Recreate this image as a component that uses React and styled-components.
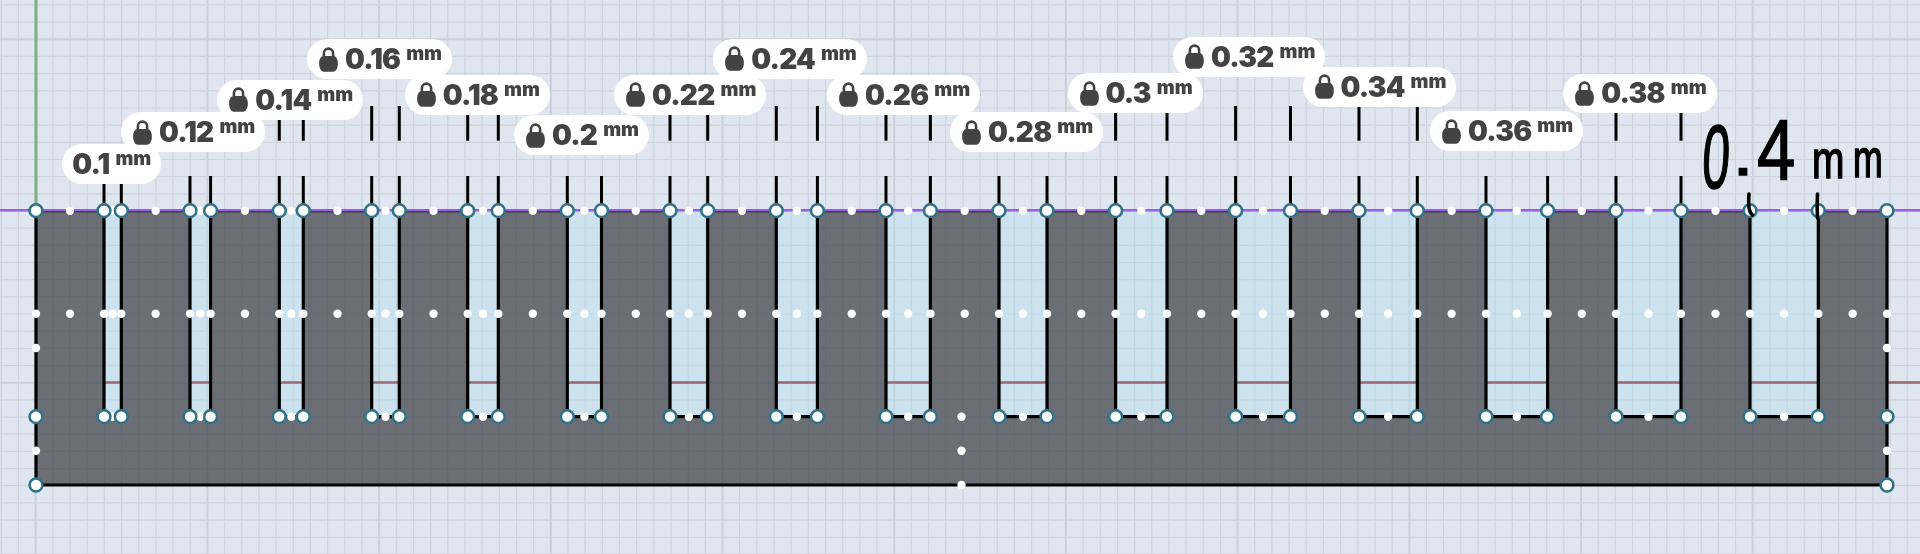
import React from "react";
import styled, { createGlobalStyle } from "styled-components";

const GlobalStyle = createGlobalStyle`
  html, body, #root {
    margin: 0;
    padding: 0;
    height: 100%;
  }
  body {
    background: #e0e6ef;
    font-family: "Inter", "Liberation Sans", sans-serif;
    overflow: hidden;
  }
`;

const Canvas = styled.div`
  position: relative;
  width: 1920px;
  height: 554px;
  overflow: hidden;
  background: #e0e6ef;
  filter: blur(0.35px);
`;

const Sketch = styled.svg`
  display: block;
`;

const DimensionPill = styled.div`
  position: absolute;
  left: ${(p) => p.$left}px;
  top: ${(p) => p.$top}px;
  height: 39.5px;
  box-sizing: border-box;
  padding: 0 10px 0 ${(p) => (p.$locked ? 12 : 10)}px;
  display: flex;
  align-items: center;
  background: #fff;
  border-radius: 20px;
  color: #434343;
  white-space: nowrap;
`;

const Value = styled.span`
  font-size: 28px;
  font-weight: 900;
  letter-spacing: -0.8px;
  line-height: 1;
  margin-left: ${(p) => (p.$locked ? 7 : 0)}px;
`;

const Unit = styled.span`
  font-size: 19px;
  font-weight: 900;
  line-height: 1;
  margin-left: 6px;
  margin-top: -11px;
`;

const Note = styled.div`
  position: absolute;
  left: 1700px;
  top: 112px;
  display: flex;
  align-items: baseline;
  color: #000;
  font-family: "Liberation Sans", sans-serif;
  line-height: 1;
  -webkit-text-stroke: 1.6px #000;
`;

const NoteGlyph = styled.span`
  display: block;
  width: ${(p) => p.$width}px;
  font-size: ${(p) => p.$size}px;
  transform-origin: left bottom;
  transform: translateY(${(p) => p.$lift || 0}px) scaleX(${(p) => p.$sx}) skewX(${(p) => p.$skew || 0}deg);
`;

const ORIGIN_X = 35.7;
const ORIGIN_Y = 39.3;
const STEP = 17.17;

const LEFT = 36;
const RIGHT = 1887;
const TOP = 210.7;
const MID = 313.7;
const AXIS = 382.5;
const SLOT_BOTTOM = 416.7;
const BOTTOM = 485;

const slots = [
  [104, 121.3],
  [190, 210.6],
  [279.3, 303.3],
  [371.7, 399.3],
  [467.7, 498.3],
  [567.3, 601.5],
  [670, 707.7],
  [776.3, 817.4],
  [886, 930.4],
  [999, 1047],
  [1115.6, 1167],
  [1235.6, 1290.5],
  [1359, 1417.3],
  [1486, 1547.6],
  [1616, 1681],
  [1750, 1818.3],
];

// y where the upper part of the extension line starts, null when there is none
const upperTops = [null, null, 120, 106, 115, null, 115, 106, 115, null, 112.7, 106, 106, null, 113];

const labels = [
  { text: "0.1", left: 62.3, top: 144, locked: false },
  { text: "0.12", left: 121, top: 112.3, locked: true },
  { text: "0.14", left: 217.3, top: 80, locked: true },
  { text: "0.16", left: 307, top: 39.3, locked: true },
  { text: "0.18", left: 404.7, top: 75, locked: true },
  { text: "0.2", left: 514, top: 115.3, locked: true },
  { text: "0.22", left: 614, top: 75, locked: true },
  { text: "0.24", left: 713.3, top: 39, locked: true },
  { text: "0.26", left: 827, top: 75, locked: true },
  { text: "0.28", left: 950, top: 112.3, locked: true },
  { text: "0.3", left: 1067.5, top: 73.3, locked: true },
  { text: "0.32", left: 1173, top: 37, locked: true },
  { text: "0.34", left: 1302.5, top: 67, locked: true },
  { text: "0.36", left: 1430, top: 111.3, locked: true },
  { text: "0.38", left: 1563.3, top: 73.5, locked: true },
];

const LockIcon = () => (
  <svg width="19" height="25" viewBox="0 0 18 24">
    <path d="M4.6 11V6a4.400 4.400 0 0 1 8.800 0V11" fill="none" stroke="#434343" strokeWidth="2.500" />
    <path
      d="M4.400 8.600h9.200c2.700 0 4.400 3 4.400 7.400 0 5-2.400 7.800-5 7.800H5c-2.600 0-5-2.800-5-7.800 0-4.400 1.700-7.400 4.400-7.400z"
      fill="#434343"
    />
  </svg>
);

const Grid = () => {
  const xs = [];
  for (let i = -2; i < 112; i++) xs.push(ORIGIN_X + i * STEP);
  const ys = [];
  for (let i = -2; i < 31; i++) ys.push(ORIGIN_Y + i * STEP);
  return (
    <g>
      {xs.map((x, i) => {
        const major = (i - 2) % 10 === 0;
        return (
          <line key={x} x1={x} x2={x} y1="0" y2="554" stroke={major ? "#cacfda" : "#ced3dd"} strokeWidth={major ? 2 : 1.2} />
        );
      })}
      {ys.map((y, i) => {
        const major = (i - 2) % 10 === 0;
        return (
          <line key={y} x1="0" x2="1920" y1={y} y2={y} stroke={major ? "#cacfda" : "#ced3dd"} strokeWidth={major ? 2 : 1.2} />
        );
      })}
    </g>
  );
};

const profile = () => {
  let d = `M${LEFT} ${TOP}`;
  slots.forEach(([a, b]) => {
    d += ` L${a} ${TOP} L${a} ${SLOT_BOTTOM} L${b} ${SLOT_BOTTOM} L${b} ${TOP}`;
  });
  d += ` L${RIGHT} ${TOP} L${RIGHT} ${BOTTOM} L${LEFT} ${BOTTOM} Z`;
  return d;
};

const App = () => {
  const edges = [LEFT, ...slots.flat(), RIGHT];
  const topDots = [];
  for (let i = 0; i < edges.length - 1; i++) topDots.push((edges[i] + edges[i + 1]) / 2);
  const slotMids = slots.map(([a, b]) => (a + b) / 2);

  const nodes = [
    [LEFT, TOP],
    [RIGHT, TOP],
    [LEFT, SLOT_BOTTOM],
    [RIGHT, SLOT_BOTTOM],
    [LEFT, BOTTOM],
    [RIGHT, BOTTOM],
  ];
  slots.forEach(([a, b]) => {
    nodes.push([a, TOP], [b, TOP], [a, SLOT_BOTTOM], [b, SLOT_BOTTOM]);
  });

  const dots = [
    ...topDots.map((x) => [x, TOP]),
    ...topDots.map((x) => [x, MID]),
    ...edges.map((x) => [x, MID]),
    ...slotMids.map((x) => [x, SLOT_BOTTOM]),
    [LEFT, 348],
    [LEFT, 450.7],
    [RIGHT, 348],
    [RIGHT, 450.7],
    [961.5, SLOT_BOTTOM],
    [961.5, 450.7],
    [961.5, BOTTOM],
  ];

  return (
    <>
      <GlobalStyle />
      <Canvas>
        <Sketch width="1920" height="554" viewBox="0 0 1920 554">
          <Grid />
          <line x1={LEFT} x2={LEFT} y1="0" y2={TOP} stroke="#7fb07f" strokeWidth="3" />
          {slots.map(([a, b]) => (
            <rect key={a} x={a} y={TOP} width={b - a} height={SLOT_BOTTOM - TOP} fill="rgb(177,222,236)" fillOpacity="0.42" />
          ))}
          <path d={profile()} fill="rgb(57,60,66)" fillOpacity="0.7" stroke="none" />
          {slots.map(([a, b]) => (
            <line key={a} x1={a} x2={b} y1={AXIS} y2={AXIS} stroke="#94686d" strokeWidth="2.400" />
          ))}
          <line x1={RIGHT} x2="1920" y1={AXIS} y2={AXIS} stroke="#94686d" strokeWidth="2.400" />
          <path d={profile()} fill="none" stroke="#000" strokeWidth="3.200" strokeLinejoin="miter" />
          <line x1="0" x2="1920" y1={TOP - 0.5} y2={TOP - 0.5} stroke="#9a5fe6" strokeWidth="2.600" />
          {upperTops.map((upper, i) => {
            const [a, b] = slots[i];
            return (
              <g key={a} stroke="#000" strokeWidth="3">
                <line x1={a} x2={a} y1="176" y2={TOP} />
                <line x1={b} x2={b} y1="176" y2={TOP} />
                {upper !== null && (
                  <>
                    <line x1={a} x2={a} y1={upper} y2="140.7" />
                    <line x1={b} x2={b} y1={upper} y2="140.7" />
                  </>
                )}
              </g>
            );
          })}
          {dots.map(([x, y]) => (
            <circle key={`${x}-${y}`} cx={x} cy={y} r="4.200" fill="#fff" />
          ))}
          {nodes.map(([x, y]) => (
            <circle key={`${x}-${y}`} cx={x} cy={y} r="6.400" fill="#fff" stroke="#2f7388" strokeWidth="2.500" />
          ))}
          <g fill="none" stroke="#000" strokeWidth="3.600" strokeLinecap="round">
            <path d="M1749 194c-.5 6-.5 12 .5 16 .5 2 2 4 3 5" />
            <path d="M1817.500 194c-.5 8-.5 16 0 24" />
          </g>
        </Sketch>
        {labels.map((l) => (
          <DimensionPill key={l.text} $left={l.left} $top={l.top} $locked={l.locked}>
            {l.locked && <LockIcon />}
            <Value $locked={l.locked}>{l.text}</Value>
            <Unit>mm</Unit>
          </DimensionPill>
        ))}
        <Note>
          <NoteGlyph $width={33} $size={90} $sx={0.55} $skew={-6}>0</NoteGlyph>
          <NoteGlyph $width={24} $size={60} $sx={1.2} $lift={-13}>.</NoteGlyph>
          <NoteGlyph $width={55} $size={86} $sx={0.8} $lift={-9}>4</NoteGlyph>
          <NoteGlyph $width={41} $size={54} $sx={0.72} $lift={-10}>m</NoteGlyph>
          <NoteGlyph $width={34} $size={54} $sx={0.66} $lift={-11}>m</NoteGlyph>
        </Note>
      </Canvas>
    </>
  );
};

export default App;
